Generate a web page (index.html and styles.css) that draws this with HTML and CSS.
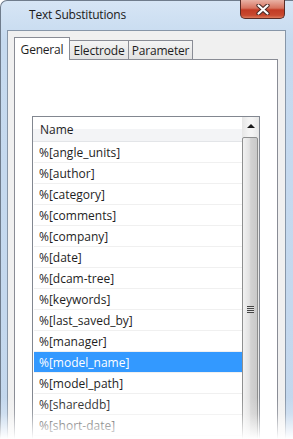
FILE: index.html
```html
<!DOCTYPE html>
<html>
<head>
    <meta name="viewport" content="width=device-width, initial-scale=1">
    <link rel="stylesheet" href="styles.css">
</head>
<body>
    <div class="window">
        <div class="titlebar">
            <span class="title">Text Substitutions</span>
            <div class="close">
                <svg width="14" height="11" viewBox="0 0 14 11">
                    <path d="M2.5 1.5 L11.5 9.5 M11.5 1.5 L2.5 9.5" stroke="#4a2a26" stroke-width="4.2" stroke-linecap="round"/>
                    <path d="M2.5 1.5 L11.5 9.5 M11.5 1.5 L2.5 9.5" stroke="#ffffff" stroke-width="2.2" stroke-linecap="round"/>
                </svg>
            </div>
        </div>
        <div class="client">
            <div class="tabs">
                <div class="tab active">General</div>
                <div class="tab electrode">Electrode</div>
                <div class="tab parameter">Parameter</div>
            </div>
            <div class="panel">
                <div class="list">
                    <div class="list-main">
                        <div class="list-header">Name</div>
                        <div class="row">%[angle_units]</div>
                        <div class="row">%[author]</div>
                        <div class="row">%[category]</div>
                        <div class="row">%[comments]</div>
                        <div class="row">%[company]</div>
                        <div class="row">%[date]</div>
                        <div class="row">%[dcam-tree]</div>
                        <div class="row">%[keywords]</div>
                        <div class="row">%[last_saved_by]</div>
                        <div class="row">%[manager]</div>
                        <div class="row selected">%[model_name]</div>
                        <div class="row">%[model_path]</div>
                        <div class="row">%[shareddb]</div>
                        <div class="row">%[short-date]</div>
                    </div>
                    <div class="scrollbar">
                        <div class="scroll-up"><span class="arrow"></span></div>
                        <div class="thumb">
                            <span class="grip"></span>
                        </div>
                    </div>
                </div>
            </div>
        </div>
    </div>
    <div class="fade"></div>
</body>
</html>
```

FILE: styles.css
```css
body {
    margin: 0;
    width: 293px;
    height: 439px;
    overflow: hidden;
    position: relative;
    background-color: #ffffff;
    font-family: "Open Sans", "Noto Sans", sans-serif;
    font-size: 12px;
    color: #1e1e1e;
}

.window {
    height: 100%;
    box-sizing: border-box;
    display: flex;
    flex-direction: column;
    padding: 0 7px 0 6px;
    border-left: 1px solid #6f7c8c;
    border-top: 1px solid #6f7c8c;
    border-top-left-radius: 7px;
    background: linear-gradient(to bottom, #d6e5f5 0, #c6daef 40px, #c3d7ed 100%);
}

.titlebar {
    height: 29px;
    flex-shrink: 0;
    display: flex;
    align-items: flex-start;
}

.title {
    margin: 6px 0 0 22px;
    line-height: 16px;
    letter-spacing: -0.2px;
    color: #1a1a1a;
}

.close {
    margin: -1px 1px 0 auto;
    width: 45px;
    height: 19px;
    box-sizing: border-box;
    display: flex;
    align-items: center;
    justify-content: center;
    border: 1px solid #5a2c26;
    border-top: none;
    border-radius: 0 0 5px 5px;
    background: linear-gradient(to bottom, #e9b2a5 0, #d7735f 45%, #c23b24 55%, #c8492f 85%, #dc7a5c 100%);
}

.client {
    flex: 1;
    min-height: 0;
    display: flex;
    flex-direction: column;
    padding: 6px 7px 0 6px;
    border: 1px solid #8796a8;
    border-bottom: none;
    background-color: #f0f0f0;
}

.tabs {
    height: 22px;
    flex-shrink: 0;
    display: flex;
    align-items: flex-end;
}

.tab {
    height: 19px;
    box-sizing: border-box;
    display: flex;
    align-items: center;
    justify-content: center;
    border: 1px solid #898c95;
    border-bottom: none;
    background: linear-gradient(to bottom, #f4f4f4, #e2e2e2);
    letter-spacing: -0.2px;
}

.tab.active {
    width: 56px;
    height: 23px;
    margin-bottom: -1px;
    position: relative;
    z-index: 1;
    background: #ffffff;
}

.tab.electrode {
    width: 59px;
    border-left: none;
}

.tab.parameter {
    width: 64px;
    border-left: none;
}

.panel {
    flex: 1;
    min-height: 0;
    display: flex;
    flex-direction: column;
    padding: 56px 17px 0 17px;
    border: 1px solid #898c95;
    border-bottom: none;
    background-color: #ffffff;
}

.list {
    flex: 1;
    min-height: 0;
    display: flex;
    border: 1px solid #828790;
    border-bottom: none;
    overflow: hidden;
}

.list-main {
    width: 209px;
    flex-shrink: 0;
    padding-left: 1px;
    box-sizing: border-box;
}

.list-header {
    height: 24px;
    margin-left: -1px;
    padding-left: 7px;
    display: flex;
    align-items: center;
    border-bottom: 1px solid #e3e5e8;
    background: linear-gradient(to bottom, #ffffff 50%, #f3f4f6 50%);
}

.row {
    height: 20px;
    padding-left: 5px;
    display: flex;
    align-items: center;
    border-bottom: 1px solid #f0f0f0;
    white-space: nowrap;
}

.row.selected {
    background-color: #3399ff;
    color: #ffffff;
}

.scrollbar {
    width: 17px;
    display: flex;
    flex-direction: column;
    overflow: hidden;
    background: linear-gradient(to right, #e6e6e6, #f4f4f4 40%, #f4f4f4 60%, #e6e6e6);
}

.scroll-up {
    height: 17px;
    flex-shrink: 0;
    display: flex;
    align-items: center;
    justify-content: center;
}

.arrow {
    width: 0;
    height: 0;
    border-left: 4px solid transparent;
    border-right: 4px solid transparent;
    border-bottom: 4px solid #1a1a1a;
}

.thumb {
    height: 343px;
    flex-shrink: 0;
    margin: 3px 1px 0 0;
    display: flex;
    align-items: center;
    justify-content: center;
    border: 1px solid #8e8f8f;
    border-radius: 2px;
    background: linear-gradient(to right, #f2f2f2, #e2e2e2 45%, #d2d2d2 55%, #c9c9c9);
}

.grip {
    width: 7px;
    height: 7px;
    background: repeating-linear-gradient(to bottom, #454545 0, #454545 1px, #e0e0e0 1px, #e0e0e0 2px);
}

.fade {
    position: absolute;
    left: 0;
    right: 0;
    bottom: 0;
    height: 42px;
    background: linear-gradient(to bottom, rgba(255, 255, 255, 0) 0, rgba(255, 255, 255, 0.2) 40%, rgba(255, 255, 255, 0.6) 70%, #ffffff 100%);
}
```
